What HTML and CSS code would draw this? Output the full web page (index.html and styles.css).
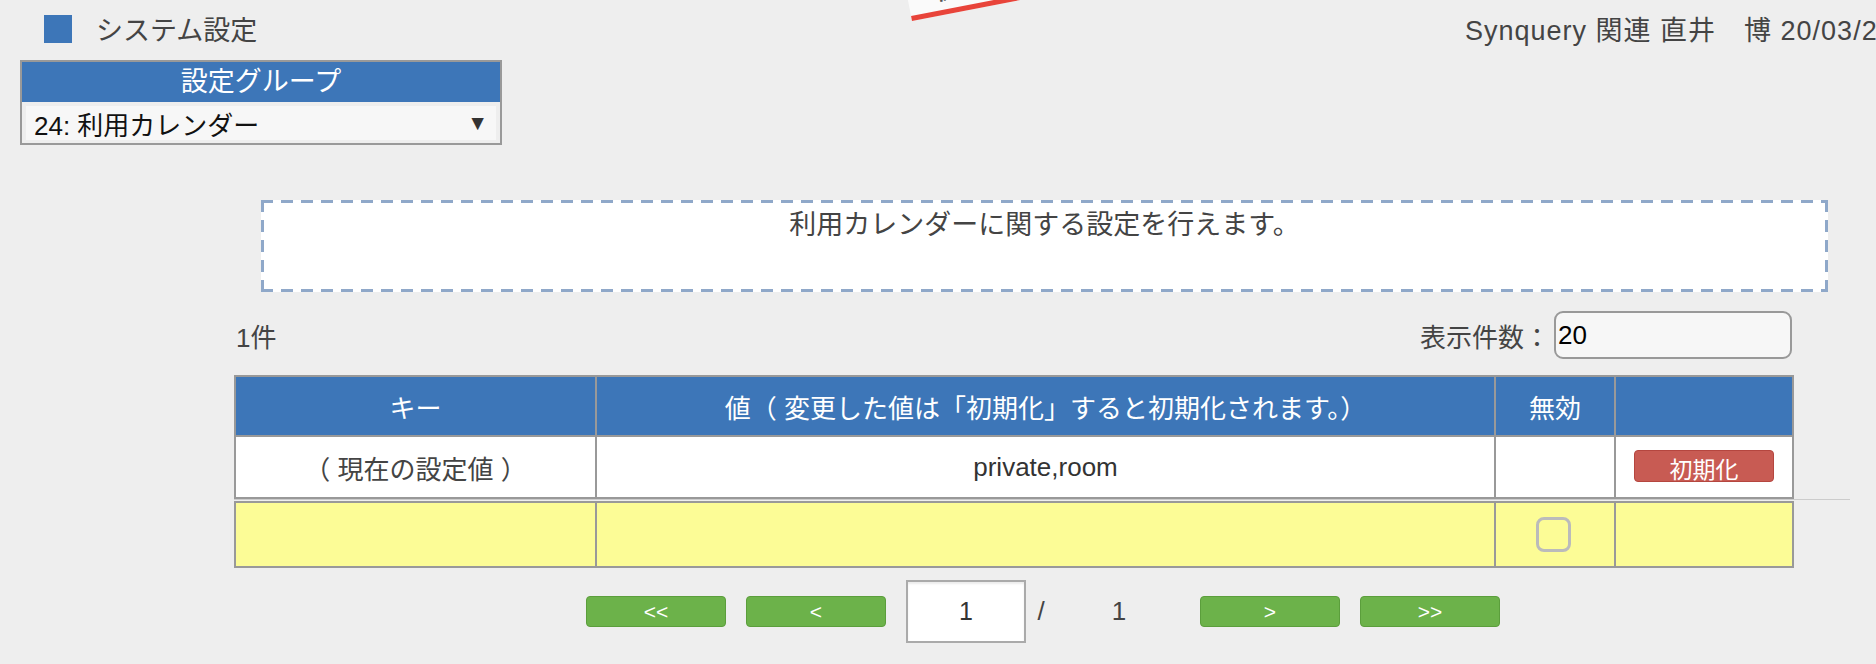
FILE: index.html
```html
<!DOCTYPE html>
<html lang="ja">
  <head>
    <meta charset="UTF-8" />
    <title>システム設定</title>
    <link rel="stylesheet" href="styles.css">
  </head>
  <body>
    <div class="ribbon"><span>開発環境</span></div>

    <div class="header">
      <div class="title"><span class="title-icon"></span>システム設定</div>
      <div class="user">Synquery 関連 直井　博 20/03/27 10:15</div>
    </div>

    <div class="group">
      <div class="group-head">設定グループ</div>
      <div class="group-body">
        <div class="group-select">
          <span>24: 利用カレンダー</span>
          <span class="arrow">▼</span>
        </div>
      </div>
    </div>

    <div class="content">
      <div class="notice">利用カレンダーに関する設定を行えます。</div>

      <div class="count-row">
        <span class="count">1件</span>
        <label class="per-page">表示件数：<input type="text" class="per-page-input" value="20" /></label>
      </div>

      <table class="grid">
        <colgroup>
          <col class="col-key" />
          <col class="col-value" />
          <col class="col-off" />
          <col class="col-action" />
        </colgroup>
        <tr>
          <th>キー</th>
          <th>値（ 変更した値は「初期化」すると初期化されます。）</th>
          <th>無効</th>
          <th></th>
        </tr>
        <tr>
          <td>（ 現在の設定値 ）</td>
          <td class="value">private,room</td>
          <td></td>
          <td><button class="btn-reset">初期化</button></td>
        </tr>
      </table>
      <div class="rule"></div>
      <table class="grid new-row">
        <colgroup>
          <col class="col-key" />
          <col class="col-value" />
          <col class="col-off" />
          <col class="col-action" />
        </colgroup>
        <tr>
          <td></td>
          <td></td>
          <td><input type="checkbox" class="check" /></td>
          <td></td>
        </tr>
      </table>

      <div class="pager">
        <button class="pager-btn first">&lt;&lt;</button>
        <button class="pager-btn">&lt;</button>
        <input type="text" class="page-input" value="1" />
        <span class="slash">/</span>
        <span class="total">1</span>
        <button class="pager-btn next">&gt;</button>
        <button class="pager-btn">&gt;&gt;</button>
      </div>
    </div>
  </body>
</html>
```

FILE: styles.css
```css
body {
  margin: 0;
  background-color: #eeeeee;
  font-family: "Liberation Sans", "Noto Sans CJK JP", sans-serif;
  font-size: 26px;
  color: #444;
  overflow: hidden;
}

/* ribbon in the top middle */
.ribbon {
  position: absolute;
  left: 912px;
  top: -44px;
  width: 320px;
  height: 60px;
  background-color: #fafafa;
  border-bottom: 5px solid #e8443a;
  transform-origin: 0 100%;
  transform: rotate(-11deg);
  display: flex;
  align-items: flex-end;
  padding: 0 0 0 30px;
  box-sizing: content-box;
  font-size: 20px;
  font-weight: bold;
  color: #555;
  line-height: 1;
}
.ribbon span {
  margin-bottom: 7px;
}

.header {
  display: flex;
  align-items: center;
  height: 57px;
}
.title {
  flex: 1;
  display: flex;
  align-items: center;
  padding-left: 44px;
  font-size: 27px;
}
.title-icon {
  width: 28px;
  height: 28px;
  background-color: #3d76b8;
  margin-right: 24px;
}
.user {
  width: 411px;
  white-space: nowrap;
  overflow: hidden;
  font-size: 27px;
  letter-spacing: 1px;
}

.group {
  margin: 3px 0 0 20px;
  width: 482px;
  box-sizing: border-box;
  border: 2px solid #999;
}
.group-head {
  background-color: #3d76b8;
  color: white;
  text-align: center;
  height: 40px;
  line-height: 40px;
  font-size: 27px;
}
.group-body {
  padding: 4px 4px 3px;
}
.group-select {
  display: flex;
  justify-content: space-between;
  align-items: center;
  height: 34px;
  padding: 0 8px;
  background-color: #f7f7f7;
  color: #111;
}
.arrow {
  font-size: 21px;
  color: #333;
}

.content {
  margin-left: 234px;
  width: 1558px;
}
.notice {
  margin: 55px 0 0 27px;
  width: 1567px;
  height: 92px;
  box-sizing: border-box;
  padding: 7px 3px 3px;
  background:
    linear-gradient(90deg, #8fa8c9 12px, transparent 0) 0 0 / 20px 3px repeat-x,
    linear-gradient(90deg, #8fa8c9 12px, transparent 0) 0 100% / 20px 3px repeat-x,
    linear-gradient(#8fa8c9 12px, transparent 0) 0 0 / 3px 20px repeat-y,
    linear-gradient(#8fa8c9 12px, transparent 0) 100% 0 / 3px 20px repeat-y,
    white;
  text-align: center;
  line-height: 36px;
  font-size: 27px;
}

.count-row {
  display: flex;
  justify-content: space-between;
  align-items: center;
  margin-top: 19px;
  height: 48px;
}
.count {
  padding-left: 2px;
}
.per-page {
  display: flex;
  align-items: center;
}
.per-page-input {
  width: 238px;
  height: 48px;
  box-sizing: border-box;
  border: 2px solid #999;
  border-radius: 9px;
  background-color: #f7f7f7;
  padding: 0 2px;
  font-family: inherit;
  font-size: 26px;
  color: #000;
  margin-left: 4px;
}

.grid {
  width: 100%;
  border-collapse: collapse;
  table-layout: fixed;
}
.grid:first-of-type {
  margin-top: 16px;
}
.col-key {
  width: 361px;
}
.col-value {
  width: 899px;
}
.col-off {
  width: 120px;
}
.col-action {
  width: 178px;
}
.grid th,
.grid td {
  border: 2px solid #999;
  text-align: center;
  padding: 0;
}
.grid th {
  background-color: #3d76b8;
  color: white;
  font-weight: normal;
  height: 58px;
}
.grid td {
  background-color: white;
  height: 60px;
}
.value {
  color: #333;
}
.rule {
  width: 1616px;
  height: 1px;
  margin-bottom: 1px;
  background-color: #ccc;
}
.new-row td {
  background-color: #fcfc96;
  height: 63px;
}
.check {
  appearance: none;
  width: 35px;
  height: 35px;
  margin: 0 4px 0 0;
  border: 3px solid #bbb;
  border-radius: 8px;
  vertical-align: middle;
}

.btn-reset {
  width: 140px;
  height: 32px;
  padding: 0;
  background-color: #c85b53;
  border: 1px solid #b5463f;
  border-radius: 4px;
  color: white;
  font-family: inherit;
  font-size: 23px;
}

.pager {
  display: flex;
  align-items: center;
  height: 63px;
  margin-top: 12px;
}
.pager-btn {
  width: 140px;
  height: 31px;
  padding: 0;
  margin-left: 20px;
  background-color: #6cb24a;
  border: 1px solid #5b9e3c;
  border-radius: 4px;
  color: white;
  font-family: inherit;
  font-size: 21px;
}
.pager-btn.first {
  margin-left: 352px;
}
.pager-btn.next {
  margin-left: 18px;
}
.page-input {
  width: 120px;
  height: 63px;
  box-sizing: border-box;
  margin-left: 20px;
  border: 2px solid #aaa;
  background-color: white;
  box-shadow: inset 0 2px 2px rgba(0, 0, 0, 0.08);
  text-align: center;
  font-family: inherit;
  font-size: 25px;
  color: #333;
}
.slash {
  width: 30px;
  text-align: center;
}
.total {
  width: 126px;
  text-align: center;
}
```
